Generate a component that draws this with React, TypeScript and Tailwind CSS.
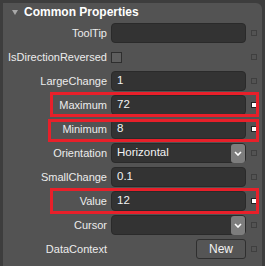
import React from 'react';

type Row = {
  label: string;
  kind: 'text' | 'check' | 'select' | 'button';
  value?: string;
  set?: boolean;
};

const rows: Row[] = [
  { label: 'ToolTip', kind: 'text', value: '' },
  { label: 'IsDirectionReversed', kind: 'check' },
  { label: 'LargeChange', kind: 'text', value: '1' },
  { label: 'Maximum', kind: 'text', value: '72', set: true },
  { label: 'Minimum', kind: 'text', value: '8', set: true },
  { label: 'Orientation', kind: 'select', value: 'Horizontal' },
  { label: 'SmallChange', kind: 'text', value: '0.1' },
  { label: 'Value', kind: 'text', value: '12', set: true },
  { label: 'Cursor', kind: 'select', value: '' },
  { label: 'DataContext', kind: 'button', value: 'New' },
];

const Chevron = () => (
  <div className="w-[14px] h-[19px] rounded-[3px] bg-[#7d7d7d] flex items-center justify-center">
    <svg width="8" height="5" viewBox="0 0 8 5">
      <path d="M1 1 L4 4 L7 1" stroke="#ffffff" strokeWidth="1.6" fill="none" />
    </svg>
  </div>
);

const Control = ({ row }: { row: Row }) => {
  if (row.kind === 'check') {
    return (
      <div className="h-[20px] flex items-center">
        <div className="w-[11px] h-[11px] border border-[#2e2e2e] bg-[#5e5e5e]" />
      </div>
    );
  }
  if (row.kind === 'button') {
    return (
      <div className="h-[20px] flex justify-end">
        <div className="w-[50px] h-[20px] rounded-[3px] border border-[#2f2f2f] bg-[#555555] flex items-center justify-center text-[#f2f2f2] text-[12px]">
          {row.value}
        </div>
      </div>
    );
  }
  return (
    <div className="h-[20px] rounded-[4px] bg-[#333333] border border-[#2a2a2a] flex items-center justify-between pl-[5px]">
      <span className="text-[#f2f2f2] text-[11.5px] leading-none">{row.value}</span>
      {row.kind === 'select' && <Chevron />}
    </div>
  );
};

export default function App() {
  return (
    <div
      className="relative w-[265px] h-[266px] bg-[#3d3d3d] pt-[3px] pl-[3px] pr-[3px] overflow-hidden"
      style={{ fontFamily: '"Liberation Sans", Arial, sans-serif' }}
    >
      <div className="h-full bg-[#535353] rounded-tr-[6px]">
        <div className="h-[18px] flex items-center pl-[9px] gap-[6px]">
          <svg width="6" height="5" viewBox="0 0 6 5">
            <path d="M0 0 L6 0 L3 5 Z" fill="#a8a8a8" />
          </svg>
          <span className="text-white font-bold text-[12px]">Common Properties</span>
        </div>
        {rows.map((row) => (
          <div key={row.label} className="h-[24px] grid grid-cols-[104px_135px_6px] gap-x-[4px] items-center">
            <span className="text-right text-[#ececec] text-[11px] whitespace-nowrap">{row.label}</span>
            <Control row={row} />
            <div
              className={`w-[6px] h-[6px] ml-[1px] border ${
                row.set ? 'bg-white border-[#222222]' : 'border-[#3f3f3f]'
              }`}
            />
          </div>
        ))}
      </div>

      {/* annotation boxes */}
      <div className="absolute left-[50px] top-[92px] w-[209px] h-[25px] border-[3px] border-[#e8202a]" />
      <div className="absolute left-[48px] top-[119px] w-[211px] h-[23px] border-[3px] border-[#e8202a]" />
      <div className="absolute left-[50px] top-[188px] w-[209px] h-[26px] border-[3px] border-[#e8202a]" />
    </div>
  );
}
